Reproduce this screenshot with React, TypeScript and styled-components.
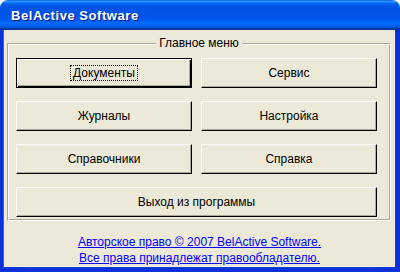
import React from "react";
import styled, { createGlobalStyle } from "styled-components";

const Global = createGlobalStyle`
  html, body { margin: 0; padding: 0; background: #ffffff; }
  * { box-sizing: border-box; }
`;

const Window = styled.div`
  width: 400px;
  height: 272px;
  display: flex;
  flex-direction: column;
  font-family: "Liberation Sans", Arial, sans-serif;
`;

const TitleBar = styled.div`
  height: 30px;
  flex: none;
  border-radius: 8px 8px 0 0;
  background: linear-gradient(
    to bottom,
    #0058ee 0%,
    #3593ff 4%,
    #288eff 6%,
    #127dff 8%,
    #036ffc 10%,
    #0262ee 14%,
    #0057e5 20%,
    #0054e3 24%,
    #0055eb 56%,
    #005bf5 66%,
    #026afe 76%,
    #0062ef 86%,
    #0052d6 92%,
    #0040ab 94%,
    #003092 100%
  );
  display: flex;
  align-items: center;
  padding: 1px 0 0 11px;
`;

const Title = styled.span`
  color: #ffffff;
  font-weight: bold;
  font-size: 13px;
  letter-spacing: 0.55px;
  text-shadow: 1px 1px 0 #0a1883;
`;

const Frame = styled.div`
  flex: 1;
  display: flex;
  flex-direction: column;
  background: #ece9d8;
  border-style: solid;
  border-color: #0831d9;
  border-width: 0 4px 4px 3px;
  box-shadow: inset 1px 0 0 #166aee, inset -1px -1px 0 #0b3fda;
  padding: 13px 5px 0 4px;
`;

const Group = styled.div`
  position: relative;
  width: 384px;
  height: 178px;
  flex: none;
  border-style: solid;
  border-width: 1px;
  border-color: #aca899 #ffffff #ffffff #aca899;
  box-shadow: inset 1px 1px 0 #ffffff, inset -1px -1px 0 #aca899;
  padding: 14px 13px 0 8px;
`;

const Legend = styled.span`
  position: absolute;
  top: -8px;
  left: 50%;
  transform: translateX(-50%);
  background: #ece9d8;
  padding: 0 3px;
  font-size: 12px;
  line-height: 14px;
  color: #000000;
  white-space: nowrap;
`;

const Grid = styled.div`
  display: grid;
  grid-template-columns: 176px 176px;
  grid-auto-rows: 30px;
  column-gap: 9px;
  row-gap: 13px;
`;

const Button = styled.button<{ $default?: boolean; $wide?: boolean }>`
  grid-column: ${(p) => (p.$wide ? "1 / span 2" : "auto")};
  margin: 0;
  padding: 0;
  background: #ece9d8;
  font-family: "Liberation Sans", Arial, sans-serif;
  font-size: 12px;
  color: #000000;
  display: flex;
  align-items: center;
  justify-content: center;
  border-style: solid;
  border-width: 1px;
  border-color: ${(p) =>
    p.$default ? "#000000" : "#ffffff #000000 #000000 #ffffff"};
  box-shadow: ${(p) =>
    p.$default
      ? "inset 1px 1px 0 #ffffff, inset -1px -1px 0 #000000, inset -2px -2px 0 #aca899"
      : "inset -1px -1px 0 #aca899"};
  cursor: default;
`;

const Focus = styled.span`
  border: 1px dotted #000000;
  padding: 1px 2px 1px 2px;
  line-height: 12px;
`;

const Links = styled.div`
  flex: 1;
  display: flex;
  flex-direction: column;
  align-items: center;
  justify-content: center;
  padding-top: 10px;
  padding-left: 1px;
`;

const Link = styled.a`
  color: #0000ff;
  text-decoration: underline;
  font-size: 12px;
  line-height: 16px;
`;

export default function App() {
  return (
    <>
      <Global />
      <Window>
        <TitleBar>
          <Title>BelActive Software</Title>
        </TitleBar>
        <Frame>
          <Group>
            <Legend>Главное меню</Legend>
            <Grid>
              <Button $default>
                <Focus>Документы</Focus>
              </Button>
              <Button>Сервис</Button>
              <Button>Журналы</Button>
              <Button>Настройка</Button>
              <Button>Справочники</Button>
              <Button>Справка</Button>
              <Button $wide>Выход из программы</Button>
            </Grid>
          </Group>
          <Links>
            <Link href="#">Авторское право © 2007 BelActive Software.</Link>
            <Link href="#">Все права принадлежат правообладателю.</Link>
          </Links>
        </Frame>
      </Window>
    </>
  );
}
